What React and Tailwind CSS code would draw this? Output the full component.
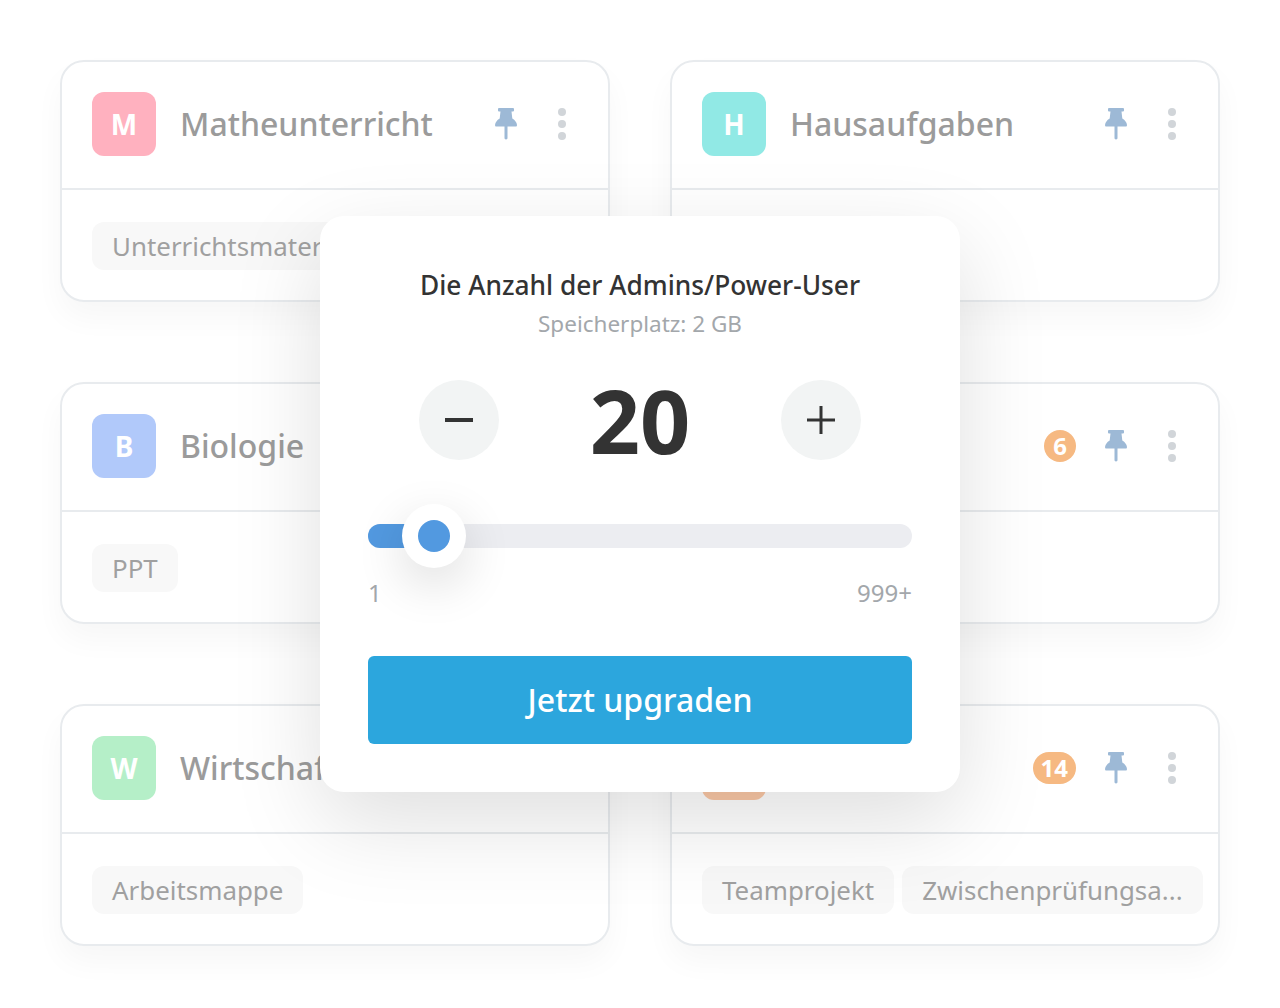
import React from "react";

const cards = [
  { letter: "M", title: "Matheunterricht", color: "bg-[#ffb1bf]", tags: ["Unterrichtsmaterial"] },
  { letter: "H", title: "Hausaufgaben", color: "bg-[#91e9e5]", tags: [] },
  { letter: "B", title: "Biologie", color: "bg-[#b1c9fa]", tags: ["PPT"] },
  { letter: "E", title: "Englisch", color: "bg-[#b1c9fa]", badge: "6", tags: [] },
  { letter: "W", title: "Wirtschaft", color: "bg-[#b5efc8]", tags: ["Arbeitsmappe"] },
  { letter: "P", title: "Projekte", color: "bg-[#fbc8a6]", badge: "14", tags: ["Teamprojekt", "Zwischenprüfungsa..."] },
];

const Pin = () => (
  <svg viewBox="0 0 22 32" className="h-8 w-[22px] text-[#9db9d6]" fill="currentColor">
    <path d="M4 0H18Q19 0 19 1V2.5Q19 3.5 18 3.5H16.5L17.3 10.5Q21.5 13 22 17Q22 18.5 21 18.5H12.5V30.5Q11 32.5 9.5 30.5V18.5H1Q0 18.5 0 17Q0.5 13 4.7 10.5L5.5 3.5H4Q3 3.5 3 2.5V1Q3 0 4 0Z" />
  </svg>
);

const Card = ({ card }) => (
  <div className="h-[242px] rounded-[24px] border-2 border-[#e8ebee] bg-white shadow-[0_16px_30px_rgba(0,0,0,0.035)]">
    <div className="flex h-[128px] items-start border-b-2 border-[#e8ebee] pl-[30px] pr-[42px] pt-[30px]">
      <div className={`flex h-16 w-16 shrink-0 items-center justify-center rounded-xl text-[28px] font-bold text-white ${card.color}`}>
        {card.letter}
      </div>
      <div className="ml-[24px] flex h-16 items-center text-[32px] font-medium text-[#9b9b9b]">{card.title}</div>
      <div className="ml-auto flex h-16 items-center">
        {card.badge && (
          <span className="mr-[29px] flex h-8 min-w-8 items-center justify-center rounded-full bg-[#f6b982] px-2 text-[24px] font-bold text-white">
            {card.badge}
          </span>
        )}
        <Pin />
        <div className="ml-[41px] flex flex-col gap-1">
          <span className="h-2 w-2 rounded-full bg-[#d1d5d9]" />
          <span className="h-2 w-2 rounded-full bg-[#d1d5d9]" />
          <span className="h-2 w-2 rounded-full bg-[#d1d5d9]" />
        </div>
      </div>
    </div>
    <div className="flex gap-2 pl-[30px] pt-[32px]">
      {card.tags.map((t) => (
        <span key={t} className="flex h-12 items-center whitespace-nowrap rounded-xl bg-[#f8f8f8] px-5 text-[25.9px] text-[#a0a0a0]">
          {t}
        </span>
      ))}
    </div>
  </div>
);

const RoundButton = ({ children }) => (
  <button className="flex h-20 w-20 items-center justify-center rounded-full bg-[#f2f4f4] text-[#333333]">
    <svg viewBox="0 0 28 28" className="h-7 w-7" fill="currentColor">
      {children}
    </svg>
  </button>
);

export default function App() {
  return (
    <div className="relative h-[1008px] bg-white font-['Noto_Sans','Open_Sans',sans-serif]">
      <div className="grid grid-cols-2 gap-x-[60px] gap-y-[80px] px-[60px] pt-[60px]">
        {cards.map((c) => (
          <Card key={c.letter} card={c} />
        ))}
      </div>

      {/* Upgrade dialog */}
      <div className="absolute left-[320px] top-[216px] h-[576px] w-[640px] rounded-[24px] bg-white px-12 pt-[50px] shadow-[0_30px_90px_rgba(0,0,0,0.13)]">
        <h2 className="text-center text-[26.3px] font-medium leading-[38px] text-[#333333]">
          Die Anzahl der Admins/Power-User
        </h2>
        <p className="text-center text-[22.5px] leading-[40px] text-[#a3a7ab]">Speicherplatz: 2 GB</p>

        <div className="mt-[36px] flex items-center justify-between px-[51px]">
          <RoundButton>
            <rect x="0" y="12" width="28" height="4" />
          </RoundButton>
          <span className="text-[88px] font-bold leading-[80px] text-[#333333]">20</span>
          <RoundButton>
            <rect x="0" y="12.5" width="28" height="3" />
            <rect x="12.5" y="0" width="3" height="28" />
          </RoundButton>
        </div>

        <div className="relative mt-[64px] h-6 rounded-full bg-[#ecedf1]">
          <div className="h-6 w-[50px] rounded-full bg-[#5299e0]" />
          <div className="absolute left-[34px] top-[-20px] flex h-16 w-16 items-center justify-center rounded-full bg-white shadow-[0_16px_50px_rgba(0,0,0,0.14)]">
            <div className="h-8 w-8 rounded-full bg-[#5299e0]" />
          </div>
        </div>
        <div className="mt-[27px] flex justify-between text-[24px] leading-[36px] text-[#a3a7ab]">
          <span>1</span>
          <span>999+</span>
        </div>

        <button className="mt-[45px] h-[88px] w-full rounded-md bg-[#2ca6dd] text-[32px] font-medium text-white">
          Jetzt upgraden
        </button>
      </div>
    </div>
  );
}
